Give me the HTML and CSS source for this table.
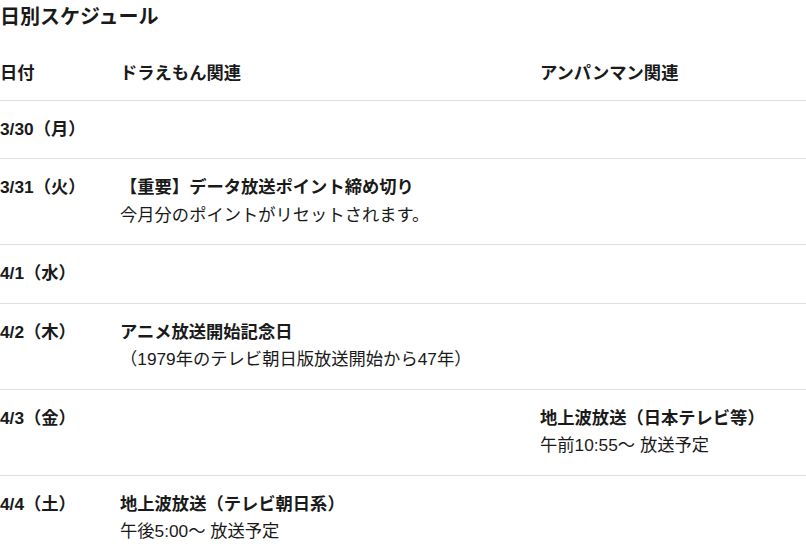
FILE: index.html
```html
<!DOCTYPE html>
<html lang="ja">
<head>
<meta charset="utf-8">
<title>日別スケジュール</title>
<link rel="stylesheet" href="styles.css">
</head>
<body>
<h2 class="title">日別スケジュール</h2>
<table class="schedule">
  <colgroup>
    <col class="col-date">
    <col class="col-dora">
    <col class="col-anpan">
  </colgroup>
  <thead>
    <tr>
      <th>日付</th>
      <th>ドラえもん関連</th>
      <th>アンパンマン関連</th>
    </tr>
  </thead>
  <tbody>
    <tr>
      <td class="date">3/30（月）</td>
      <td></td>
      <td></td>
    </tr>
    <tr>
      <td class="date">3/31（火）</td>
      <td><div class="ev-title">【重要】データ放送ポイント締め切り</div><div class="ev-sub">今月分のポイントがリセットされます。</div></td>
      <td></td>
    </tr>
    <tr>
      <td class="date">4/1（水）</td>
      <td></td>
      <td></td>
    </tr>
    <tr>
      <td class="date">4/2（木）</td>
      <td><div class="ev-title">アニメ放送開始記念日</div><div class="ev-sub">（1979年のテレビ朝日版放送開始から47年）</div></td>
      <td></td>
    </tr>
    <tr>
      <td class="date">4/3（金）</td>
      <td></td>
      <td><div class="ev-title">地上波放送（日本テレビ等）</div><div class="ev-sub">午前10:55～ 放送予定</div></td>
    </tr>
    <tr>
      <td class="date">4/4（土）</td>
      <td><div class="ev-title">地上波放送（テレビ朝日系）</div><div class="ev-sub">午後5:00～ 放送予定</div></td>
      <td></td>
    </tr>
  </tbody>
</table>
</body>
</html>
```

FILE: styles.css
```css
html, body {
  margin: 0;
  padding: 0;
  background: #fff;
}
body {
  font-family: "Liberation Sans", "Noto Sans CJK JP", sans-serif;
  font-size: 17.3px;
  line-height: 27.5px;
  color: #1a1a1a;
}
.title {
  margin: 0 0 14px;
  padding-top: 3px;
  font-size: 20px;
  line-height: 28px;
  font-weight: bold;
}
.schedule {
  width: 806px;
  border-collapse: collapse;
  table-layout: fixed;
}
.col-date { width: 120px; }
.col-dora { width: 420px; }
.col-anpan { width: 266px; }
.schedule th {
  text-align: left;
  font-weight: bold;
  padding: 15px 0 12px;
  border-bottom: 1px solid #e0e0e0;
  vertical-align: top;
}
.schedule td {
  padding: 15px 0;
  border-bottom: 1px solid #e0e0e0;
  vertical-align: top;
}
.date,
.ev-title {
  font-weight: bold;
}
```
